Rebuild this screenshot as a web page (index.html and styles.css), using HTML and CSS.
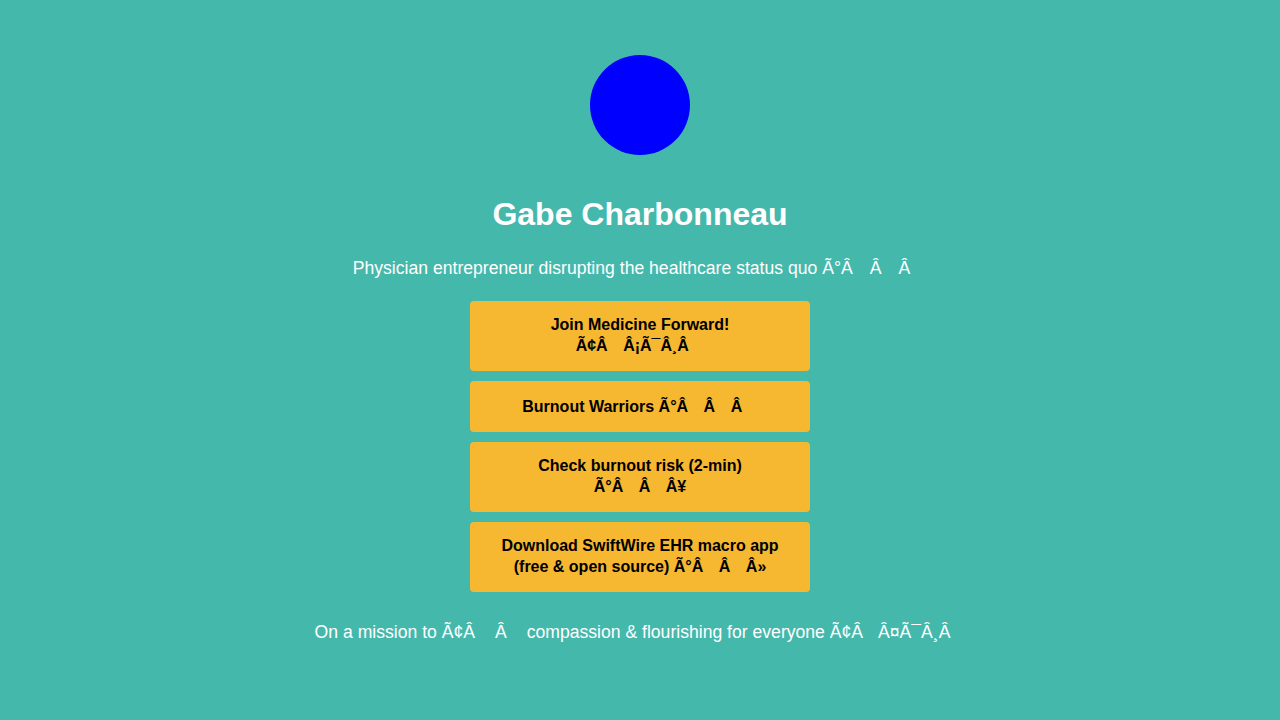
FILE: index.html
```html
<!DOCTYPE html>
<html lang="en">
<head>
<meta charset="utf-8">
<title>Gabe Charbonneau</title>
<link rel="stylesheet" href="styles.css">
</head>
<body>
<main class="profile">
  <div class="avatar"></div>
  <h1 class="name">Gabe Charbonneau</h1>
  <p class="bio">Physician entrepreneur disrupting the healthcare status quo <span class="garble">Ã°Â<span class="gap"></span>Â<span class="gap"></span>Â<span class="gap"></span></span></p>
  <nav class="links">
    <a class="link" href="#">Join Medicine Forward!<br><span class="garble">Ã¢Â<span class="gap"></span>Â¡Ã¯Â¸Â<span class="gap"></span></span></a>
    <a class="link" href="#">Burnout Warriors <span class="garble">Ã°Â<span class="gap"></span>Â<span class="gap"></span>Â<span class="gap"></span></span></a>
    <a class="link" href="#">Check burnout risk (2-min)<br><span class="garble">Ã°Â<span class="gap"></span>Â<span class="gap"></span>Â¥</span></a>
    <a class="link" href="#">Download SwiftWire EHR macro app<br><span class="garble">(free &amp; open source) Ã°Â<span class="gap"></span>Â<span class="gap"></span>Â»</span></a>
  </nav>
  <p class="mission">On a mission to <span class="garble">Ã¢Â<span class="gap gap-wide"></span>Â<span class="gap"></span></span> compassion &amp; flourishing for everyone <span class="garble">Ã¢Â<span class="gap"></span>Â¤Ã¯Â¸Â<span class="gap"></span></span></p>
</main>
</body>
</html>
```
FILE: styles.css
```css
html, body {
  margin: 0;
  padding: 0;
}
body {
  background: #45b8ac;
  font-family: "Liberation Sans", Arial, Helvetica, sans-serif;
  color: #ffffff;
  min-height: 720px;
}
.profile {
  display: flex;
  flex-direction: column;
  align-items: center;
  padding-top: 55px;
}
.avatar {
  width: 100px;
  height: 100px;
  border-radius: 50%;
  background: #0000ff;
}
.name {
  margin: 41px 0 0;
  font-size: 32px;
  line-height: 37px;
  font-weight: 700;
  text-align: center;
}
.bio {
  margin: 25px 0 0;
  font-size: 17.6px;
  line-height: 20px;
  text-align: center;
}
.garble {
  white-space: nowrap;
}
.gap {
  display: inline-block;
  width: 17px;
}
.links {
  margin-top: 23px;
  display: flex;
  flex-direction: column;
  gap: 10px;
  width: 340px;
}
.link {
  display: block;
  background: #f6b731;
  color: #000000;
  text-decoration: none;
  font-weight: 700;
  font-size: 16px;
  line-height: 19px;
  text-align: center;
  padding: 13.5px 28px;
  border-radius: 4px;
}
.link .garble {
  line-height: 24px;
}
.link .gap {
  width: 15.5px;
}
.mission {
  margin: 30px 0 0;
  font-size: 17.6px;
  line-height: 20px;
  text-align: center;
}
.mission .gap {
  width: 15px;
}
.mission .gap-wide {
  width: 20px;
}
```
